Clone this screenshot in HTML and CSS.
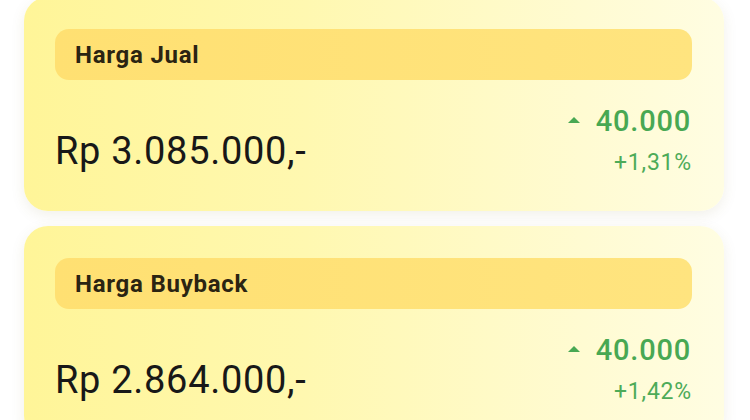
FILE: index.html
```html
<!DOCTYPE html>
<html lang="id">
<head>
  <meta charset="UTF-8">
  <title>Harga Emas</title>
  <link rel="stylesheet" href="styles.css">
</head>
<body>

<div class="daftar-harga">
  <!-- Harga jual -->
  <div class="kartu">
    <div class="label">Harga Jual</div>
    <div class="isi">
      <div class="harga">Rp 3.085.000,-</div>
      <div class="perubahan">
        <div class="selisih"><span class="panah"></span>40.000</div>
        <div class="persen">+1,31%</div>
      </div>
    </div>
  </div>

  <!-- Harga buyback -->
  <div class="kartu">
    <div class="label">Harga Buyback</div>
    <div class="isi">
      <div class="harga">Rp 2.864.000,-</div>
      <div class="perubahan">
        <div class="selisih"><span class="panah"></span>40.000</div>
        <div class="persen">+1,42%</div>
      </div>
    </div>
  </div>
</div>

</body>
</html>
```

FILE: styles.css
```css
body {
  margin: 0;
  background-color: #fff;
  font-family: Roboto, 'Noto Sans', sans-serif;
  overflow: hidden;
}

.daftar-harga {
  display: flex;
  flex-direction: column;
  gap: 15px;
  padding: 0 26px 0 24px;
  margin-top: -3px;
}

.kartu {
  height: 214px;
  box-sizing: border-box;
  padding: 32px 32px 0 31px;
  border-radius: 24px;
  background: linear-gradient(to right, #fff598 0%, #fff8b0 40%, #fffbd2 80%, #fffde2 100%);
  box-shadow: 0 4px 14px rgba(120, 110, 40, 0.1);
}

.label {
  height: 51px;
  display: flex;
  align-items: center;
  padding-left: 20px;
  border-radius: 14px;
  background: linear-gradient(to right, #ffe072, #ffe47f);
  color: #2b2412;
  font-size: 24px;
  font-weight: 700;
  letter-spacing: 0.75px;
}

.isi {
  display: flex;
  justify-content: space-between;
  align-items: flex-end;
  margin-top: 24px;
}

.harga {
  font-size: 38px;
  line-height: 46px;
  letter-spacing: 0.7px;
  color: #181818;
  margin-bottom: 4px;
}

.perubahan {
  display: flex;
  flex-direction: column;
  align-items: flex-end;
  color: #48a853;
}

.selisih {
  display: flex;
  align-items: center;
  font-size: 29px;
  font-weight: 500;
  line-height: 34px;
  letter-spacing: 0.8px;
  margin-right: 1px;
}

.panah {
  width: 0;
  height: 0;
  border-left: 6px solid transparent;
  border-right: 6px solid transparent;
  border-bottom: 6px solid #48a853;
  margin: 0 16px 2px 0;
}

.persen {
  margin-top: 10px;
  font-size: 23px;
  line-height: 30px;
  letter-spacing: 0.8px;
  color: #4dab58;
}
```
